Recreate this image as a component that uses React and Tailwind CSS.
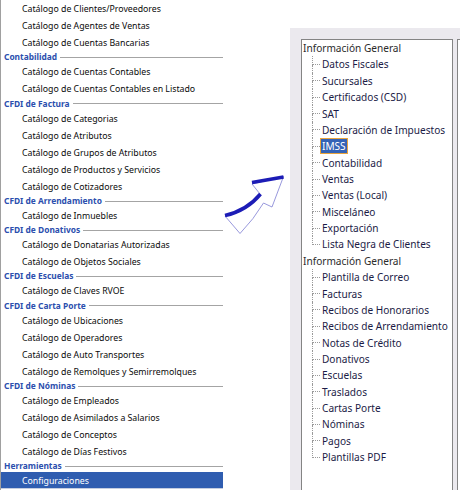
import React from "react";

const leftRows = [
  ["i", "Catálogo de Clientes/Proveedores"],
  ["i", "Catálogo de Agentes de Ventas"],
  ["i", "Catálogo de Cuentas Bancarias"],
  ["h", "Contabilidad"],
  ["i", "Catálogo de Cuentas Contables"],
  ["i", "Catálogo de Cuentas Contables en Listado"],
  ["h", "CFDI de Factura"],
  ["i", "Catálogo de Categorias"],
  ["i", "Catálogo de Atributos"],
  ["i", "Catálogo de Grupos de Atributos"],
  ["i", "Catálogo de Productos y Servicios"],
  ["i", "Catálogo de Cotizadores"],
  ["h", "CFDI de Arrendamiento"],
  ["i", "Catálogo de Inmuebles"],
  ["h", "CFDI de Donativos"],
  ["i", "Catálogo de Donatarias Autorizadas"],
  ["i", "Catálogo de Objetos Sociales"],
  ["h", "CFDI de Escuelas"],
  ["i", "Catálogo de Claves RVOE"],
  ["h", "CFDI de Carta Porte"],
  ["i", "Catálogo de Ubicaciones"],
  ["i", "Catálogo de Operadores"],
  ["i", "Catálogo de Auto Transportes"],
  ["i", "Catálogo de Remolques y Semirremolques"],
  ["h", "CFDI de Nóminas"],
  ["i", "Catálogo de Empleados"],
  ["i", "Catálogo de Asimilados a Salarios"],
  ["i", "Catálogo de Conceptos"],
  ["i", "Catálogo de Días Festivos"],
  ["h", "Herramientas"],
  ["s", "Configuraciones"],
];

const groups = [
  {
    root: "Información General",
    children: [
      "Datos Fiscales",
      "Sucursales",
      "Certificados (CSD)",
      "SAT",
      "Declaración de Impuestos",
      "IMSS",
      "Contabilidad",
      "Ventas",
      "Ventas (Local)",
      "Misceláneo",
      "Exportación",
      "Lista Negra de Clientes",
    ],
  },
  {
    root: "Información General",
    children: [
      "Plantilla de Correo",
      "Facturas",
      "Recibos de Honorarios",
      "Recibos de Arrendamiento",
      "Notas de Crédito",
      "Donativos",
      "Escuelas",
      "Traslados",
      "Cartas Porte",
      "Nóminas",
      "Pagos",
      "Plantillas PDF",
    ],
  },
];

function LeftRow({ kind, text }) {
  if (kind === "h") {
    return (
      <div className="h-[12.25px] flex items-center pl-[3px] pt-[1px] gap-[3px]">
        <span className="font-bold text-[8.4px] leading-none text-[#2c4fae] whitespace-nowrap">
          {text}
        </span>
        <div className="flex-1 h-px bg-[#a4a4a4]" />
      </div>
    );
  }
  if (kind === "s") {
    return (
      <div className="h-[17px] flex items-center pl-[21px] pt-[2px] text-[8.75px] leading-none text-white bg-[#2f5db0] border-b border-[#c4cde0] whitespace-nowrap">
        {text}
      </div>
    );
  }
  return (
    <div className="h-[17px] flex items-center pl-[21px] pt-[2px] text-[8.75px] leading-none text-[#0a0a0a] whitespace-nowrap">
      {text}
    </div>
  );
}

function TreeChild({ text, last }) {
  const selected = text === "IMSS";
  return (
    <div className="h-[16.36px] flex items-stretch">
      <div className="ml-[9px] w-[8px] flex flex-col">
        <div className="flex-1 border-l border-b border-dotted border-[#9a9a9a]" />
        <div
          className={
            last
              ? "flex-1"
              : "flex-1 border-l border-dotted border-[#9a9a9a]"
          }
        />
      </div>
      <div className="flex items-center">
        <span
          className={
            selected
              ? "leading-none px-[1px] py-[2px] border border-[#e9a33c] bg-[#3463b6] text-white"
              : "leading-none px-[1px] py-[2px] border border-transparent text-[#1b1b46]"
          }
        >
          {text}
        </span>
      </div>
    </div>
  );
}

function Arrow() {
  return (
    <svg
      className="absolute left-[220px] top-[170px]"
      width="70"
      height="70"
      viewBox="0 0 70 70"
    >
      <path
        d="M5,46 Q27,41 40,24 L32,14 L63.5,6.5 L52,37 L43.5,33 Q34,49 20,63.5 Z"
        fill="#ffffff"
        stroke="#8c8cd8"
        strokeWidth="0.9"
        strokeLinejoin="miter"
      />
      <path
        d="M5,45.5 Q27,40.5 40.5,24"
        fill="none"
        stroke="#1c1cb6"
        strokeWidth="3.6"
      />
      <path
        d="M32,12.5 L63.5,7"
        fill="none"
        stroke="#1c1cb6"
        strokeWidth="3.6"
      />
    </svg>
  );
}

export default function App() {
  return (
    <div className="relative w-[460px] h-[490px] bg-white overflow-hidden font-['Noto_Sans',sans-serif] flex">
      <div className="w-[223px] h-full flex-none border-l border-[#a0a0a0] flex flex-col">
        {leftRows.map(([k, t], i) => (
          <LeftRow key={i} kind={k} text={t} />
        ))}
      </div>
      <div className="w-[67px] flex-none" />
      <div className="flex-1 mt-[28px] bg-[#ebe9ee] pl-[11px] pt-[11px] flex gap-[4px] overflow-hidden">
        <div className="w-[152px] h-[470px] flex-none border border-[#848484] bg-white pl-px text-[10.1px]">
          {groups.map((g, gi) => (
            <div key={gi}>
              <div className="h-[16.36px] flex items-center leading-none text-[#2b2b2b] whitespace-nowrap">
                {g.root}
              </div>
              {g.children.map((c, ci) => (
                <TreeChild
                  key={ci}
                  text={c}
                  last={ci === g.children.length - 1}
                />
              ))}
            </div>
          ))}
        </div>
        <div className="flex-1 h-[470px] border-l border-t border-[#848484] bg-white" />
      </div>
      <Arrow />
    </div>
  );
}
